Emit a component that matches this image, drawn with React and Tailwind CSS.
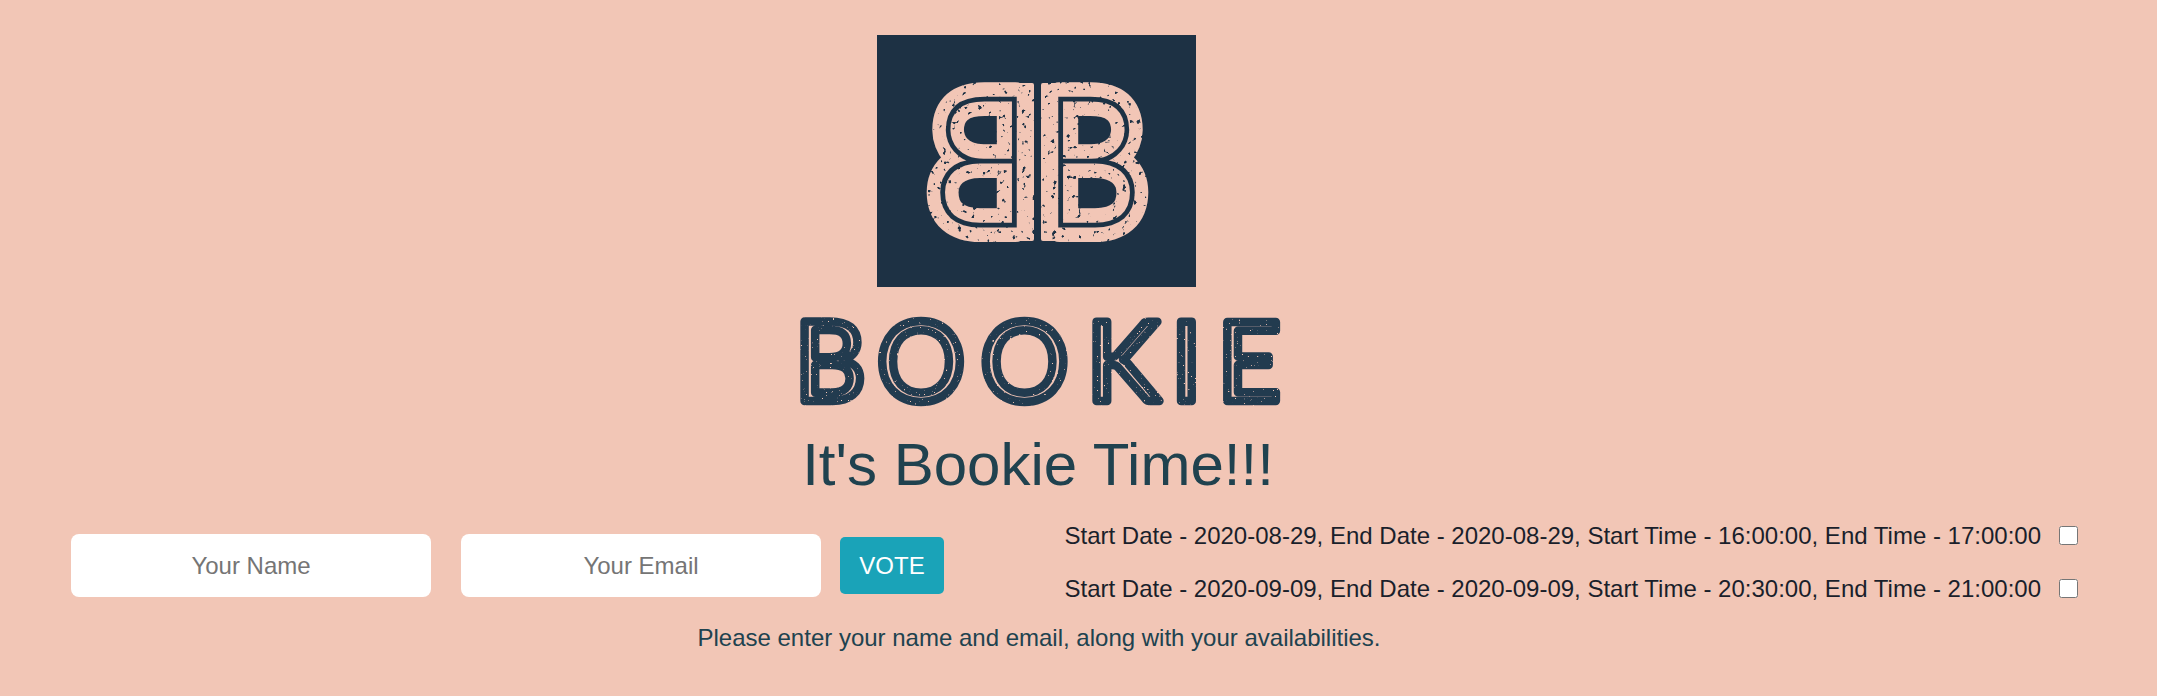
const sans = "font-['Liberation_Sans',Arial,sans-serif]";

const slots = [
  "Start Date - 2020-08-29, End Date - 2020-08-29, Start Time - 16:00:00, End Time - 17:00:00",
  "Start Date - 2020-09-09, End Date - 2020-09-09, Start Time - 20:30:00, End Time - 21:00:00",
];

const word = [
  ["B", 42],
  ["O", 133],
  ["O", 236.5],
  ["K", 335],
  ["I", 398.5],
  ["E", 461],
];

// speckled print effect shared by both logo parts
const Grain = ({ id, freq, cut, blur }) => (
  <filter id={id} x="-5%" y="-5%" width="110%" height="110%">
    <feTurbulence type="fractalNoise" baseFrequency={freq} numOctaves="2" seed="4" result="n" />
    <feColorMatrix
      in="n"
      type="matrix"
      values={`0 0 0 0 0  0 0 0 0 0  0 0 0 0 0  12 0 0 0 ${(1 - 12 * cut).toFixed(2)}`}
      result="m"
    />
    <feComposite in="SourceGraphic" in2="m" operator="in" result="c" />
    <feGaussianBlur in="c" stdDeviation={blur} />
  </filter>
);

const HalfB = ({ transform }) => (
  <g transform={transform}>
    <rect x="0" y="48" width="40" height="158" rx="2" fill="#f2c6b6" />
    <text x="-1" y="191" fill="#f2c6b6" stroke="#f2c6b6" strokeWidth="32" strokeLinejoin="round">B</text>
    <text x="-1" y="191" fill="#1d3144" stroke="#1d3144" strokeWidth="3">B</text>
  </g>
);

const Monogram = () => (
  <div className="h-[252px] w-[319px] bg-[#1d3144]">
    <svg viewBox="0 0 319 252" className="block h-full w-full">
      <defs>
        <Grain id="speck" freq="0.2" cut="0.335" blur="0.7" />
      </defs>
      <g fontFamily="Lato, sans-serif" fontWeight="100" fontSize="182" filter="url(#speck)">
        <HalfB transform="translate(164 0) scale(0.93 1)" />
        <HalfB transform="translate(157 0) scale(-0.93 1)" />
      </g>
    </svg>
  </div>
);

const Wordmark = () => (
  <svg viewBox="0 0 500 140" className="block h-[140px] w-[500px]">
    <defs>
      <Grain id="wear" freq="0.45" cut="0.28" blur="0.6" />
    </defs>
    <g
      fontFamily="Lato, sans-serif"
      fontSize="110"
      fontWeight="400"
      fill="#f2c6b6"
      stroke="#233a50"
      strokeWidth="8.5"
      strokeLinejoin="round"
      textAnchor="middle"
      filter="url(#wear)"
    >
      {word.map(([letter, x], i) => (
        <text key={i} x={x} y="114">{letter}</text>
      ))}
    </g>
  </svg>
);

const Field = ({ placeholder, type }) => (
  <input
    type={type}
    placeholder={placeholder}
    className="h-[63px] w-[360px] rounded-[8px] bg-white text-center text-[24px] text-[#495057] outline-none placeholder:text-[#757575]"
  />
);

export default function App() {
  return (
    <div className={`${sans} h-[696px] w-[2157px] overflow-hidden bg-[#f2c6b6]`}>
      <div className="flex w-[2076px] flex-col items-center pt-[35px]">
        <div className="-translate-x-[2px]">
          <Monogram />
        </div>
        <Wordmark />
        <h1 className="mt-[2px] text-[60px] leading-[72px] font-normal text-[#20424f]">It's Bookie Time!!!</h1>
      </div>

      <div className="mt-[21px] flex w-[2078px] items-start pl-[71px]">
        <form className="mt-[12px] flex items-center">
          <Field placeholder="Your Name" type="text" />
          <div className="w-[30px]" />
          <Field placeholder="Your Email" type="email" />
          <button
            type="button"
            className="ml-[19px] h-[57px] w-[104px] rounded-[5px] bg-[#1aa3b8] text-[24px] text-white"
          >
            VOTE
          </button>
        </form>
        <ul className="ml-auto flex flex-col gap-[25px] text-[24px] leading-[28px] text-[#1a1f2b]">
          {slots.map((s) => (
            <li key={s} className="flex items-center gap-[18px]">
              <span>{s}</span>
              <input type="checkbox" className="-mt-[2px] h-[19px] w-[19px]" />
            </li>
          ))}
        </ul>
      </div>

      <p className="mt-[21px] w-[2076px] translate-x-[1px] text-center text-[24px] leading-[28px] text-[#20424f]">
        Please enter your name and email, along with your availabilities.
      </p>
    </div>
  );
}
